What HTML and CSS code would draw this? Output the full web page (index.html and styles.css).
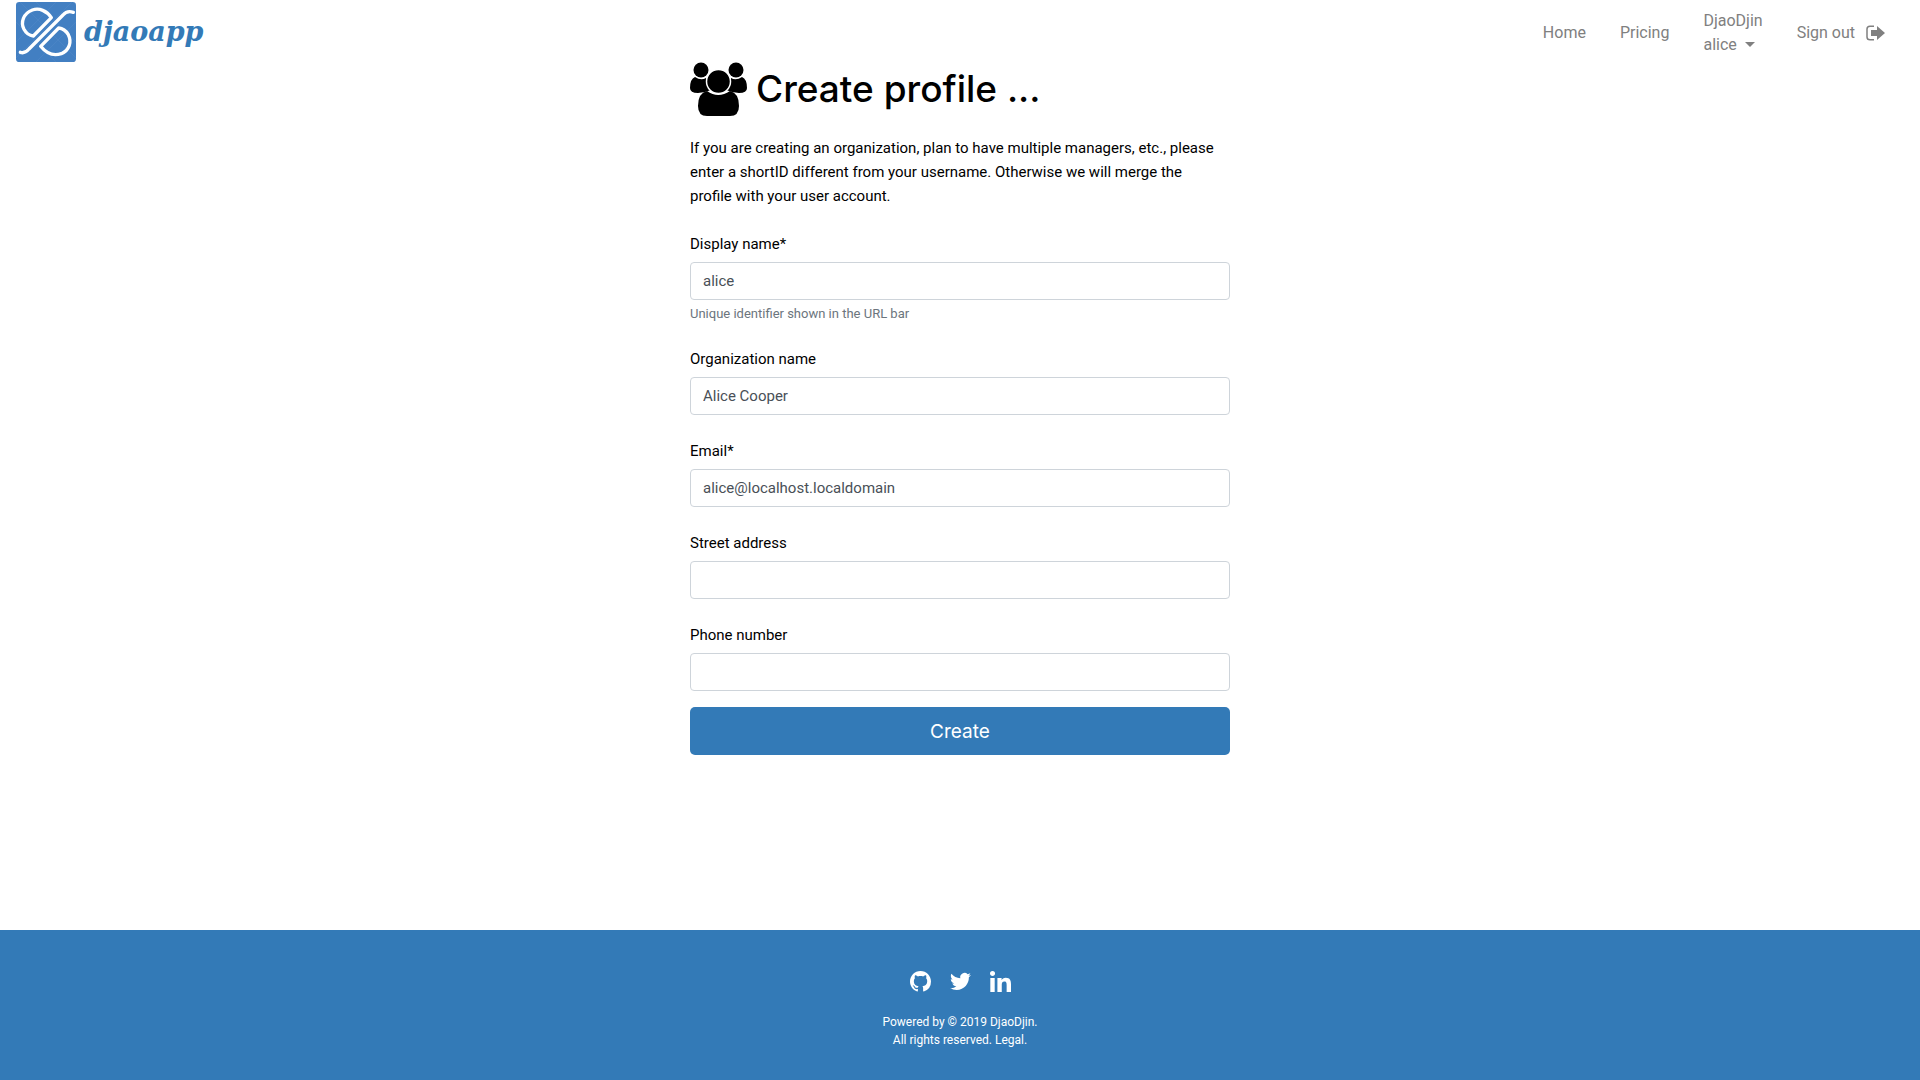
FILE: index.html
```html
<!DOCTYPE html>
<html lang="en">
<head>
<meta charset="utf-8">
<title>Create profile</title>
<link rel="stylesheet" href="styles.css">
</head>
<body>
<header class="navbar">
  <a class="brand" href="#">
    <svg class="brand-mark" viewBox="0 0 180 180" aria-hidden="true">
      <rect width="180" height="180" rx="10" fill="#427fc2"/>
      <g fill="none" stroke="#5a90cb" stroke-width="1">
        <path d="M0 120 120 0M0 60 120 180M60 0l120 120M60 180 180 60M12 0l168 168M0 168 168 0"/>
      </g>
      <g fill="none" stroke="#fff" stroke-width="10" stroke-linecap="round" stroke-linejoin="round">
        <path d="M106 47C92 26 70 17 49 24C22 35 13 60 24 82C31 95 40 101 52 102Z"/>
        <path d="M74 133L128 78C140 79 150 86 157 98C168 120 160 145 136 155C112 163 90 153 74 133Z"/>
        <path d="M13 151C24 155 31 150 39 141L141 39C150 28 159 26 172 31"/>
      </g>
    </svg>
    <span class="brand-name">djaoapp</span>
  </a>
  <nav class="nav">
    <a class="nav-link" href="#">Home</a>
    <a class="nav-link" href="#">Pricing</a>
    <a class="nav-link" href="#">DjaoDjin<br>alice <span class="caret"></span></a>
    <a class="nav-link nav-signout" href="#">Sign out
      <svg class="signout-icon" viewBox="0 0 20 16" aria-hidden="true"><path d="M8 1.200H4Q1 1.200 1 4V12Q1 14.800 4 14.800H8" fill="none" stroke="currentColor" stroke-width="1.500"/><path d="M5 5h6V1l8 7-8 7v-4H5z" fill="currentColor"/></svg>
    </a>
  </nav>
</header>
<main class="content">
  <h1 class="title">
    <svg class="title-icon" viewBox="0 0 57 54" aria-hidden="true">
      <circle cx="11" cy="8" r="7.500"/><circle cx="46" cy="8" r="7.500"/>
      <path d="M5 15Q11 19 16 16Q16 25 21 28Q14 31 8 31Q0 31 0 26Q0 17 5 15zM52 15Q46 19 41 16Q41 25 36 28Q43 31 49 31Q57 31 57 26Q57 17 52 15z"/>
      <path d="M17 29Q28 37 40 29Q49 31 49 44Q49 54 40 54H17Q8 54 8 44Q8 31 17 29z"/>
      <circle cx="28.500" cy="19.500" r="12" stroke="#fff" stroke-width="1.500"/>
    </svg>
    Create profile ...
  </h1>
  <p class="intro">If you are creating an organization, plan to have multiple managers, etc., please enter a shortID different from your username. Otherwise we will merge the profile with your user account.</p>
  <form class="form">
    <div class="field">
      <label for="slug">Display name*</label>
      <input id="slug" type="text" value="alice">
      <small class="hint">Unique identifier shown in the URL bar</small>
    </div>
    <div class="field">
      <label for="org">Organization name</label>
      <input id="org" type="text" value="Alice Cooper">
    </div>
    <div class="field">
      <label for="email">Email*</label>
      <input id="email" type="email" value="alice@localhost.localdomain">
    </div>
    <div class="field">
      <label for="street">Street address</label>
      <input id="street" type="text">
    </div>
    <div class="field">
      <label for="phone">Phone number</label>
      <input id="phone" type="tel">
    </div>
    <button class="submit" type="submit">Create</button>
  </form>
</main>
<footer class="footer">
  <div class="social">
    <a href="#" aria-label="GitHub"><svg viewBox="0 0 16 16"><path d="M8 0C3.580 0 0 3.580 0 8c0 3.540 2.290 6.530 5.470 7.590.4.070.55-.17.55-.38 0-.19-.01-.82-.01-1.490-2.010.37-2.530-.49-2.690-.94-.09-.23-.48-.94-.82-1.130-.28-.15-.68-.52-.01-.53.63-.01 1.080.58 1.230.82.72 1.210 1.870.87 2.330.66.07-.52.28-.87.51-1.070-1.780-.2-3.640-.89-3.640-3.950 0-.87.31-1.590.82-2.150-.08-.2-.36-1.020.08-2.120 0 0 .67-.21 2.200.82.64-.18 1.320-.27 2-.27s1.360.09 2 .27c1.530-1.040 2.200-.82 2.200-.82.44 1.100.16 1.920.08 2.120.51.56.82 1.270.82 2.150 0 3.070-1.870 3.750-3.650 3.950.29.25.54.73.54 1.480 0 1.070-.01 1.930-.01 2.200 0 .21.15.46.55.38A8.010 8.010 0 0 0 16 8c0-4.420-3.580-8-8-8z"/></svg></a>
    <a href="#" aria-label="Twitter"><svg viewBox="0 0 24 24"><path d="M23.950 4.570a10 10 0 0 1-2.820.77 4.960 4.960 0 0 0 2.160-2.720c-.95.550-2 .95-3.130 1.180a4.920 4.920 0 0 0-8.380 4.480C7.690 8.090 4.070 6.130 1.640 3.160a4.820 4.820 0 0 0-.67 2.480c0 1.710.87 3.210 2.190 4.100a4.900 4.900 0 0 1-2.230-.62v.06a4.920 4.920 0 0 0 3.950 4.830 5 5 0 0 1-2.210.08 4.940 4.940 0 0 0 4.600 3.420A9.870 9.870 0 0 1 0 19.540a14 14 0 0 0 7.550 2.210c9.050 0 14-7.500 14-13.980l-.02-.64a9.940 9.940 0 0 0 2.420-2.560z"/></svg></a>
    <a href="#" aria-label="LinkedIn"><svg viewBox="0 0 448 448"><path d="M100 448H7V149h93zM54 108C24 108 0 83 0 54a54 54 0 0 1 108 0c0 29-24 54-54 54zM448 448h-93V302c0-34-1-79-48-79-49 0-56 38-56 77v148h-93V149h89v41h1c13-24 43-48 88-48 94 0 112 62 112 142z"/></svg></a>
  </div>
  <p class="legal">Powered by © 2019 <a href="#">DjaoDjin</a>.<br>All rights reserved. <a href="#">Legal</a>.</p>
</footer>
</body>
</html>
```
FILE: styles.css
```css
* { box-sizing: border-box; }
body {
  margin: 0;
  min-height: 100vh;
  display: flex;
  flex-direction: column;
  font-family: Roboto, "Liberation Sans", sans-serif;
  font-size: 15px;
  line-height: 24px;
  color: #000;
  background: #fff;
}
a { color: inherit; text-decoration: none; }
.navbar {
  display: flex;
  align-items: center;
  justify-content: space-between;
  padding: 2px 16px 0;
}
.brand { display: flex; align-items: center; gap: 8px; color: #337ab7; }
.brand-mark { width: 60px; height: 60px; }
.brand-name {
  font: italic bold 27px/30px "DejaVu Serif", serif;
}
.nav {
  display: flex;
  align-items: center;
  gap: 34px;
  padding: 2px 18px 0 0;
  font-size: 16px;
  color: #808080;
}
.nav-signout { display: flex; align-items: center; gap: 11px; }
.signout-icon { width: 20px; height: 16px; }
.caret {
  display: inline-block;
  margin-left: 4px;
  vertical-align: 3px;
  border: 5px solid transparent;
  border-top-color: currentColor;
  border-bottom: 0;
}
.content {
  width: 100%;
  max-width: 540px;
  margin: 0 auto;
  flex: 1;
}
.title {
  display: flex;
  align-items: center;
  gap: 9px;
  margin: 0 0 20px;
  font-family: Inter, "Liberation Sans", sans-serif;
  font-size: 37px;
  line-height: 54px;
  font-weight: 500;
}
.title-icon { width: 57px; height: 54px; }
.intro { margin: 0 0 24px; padding-right: 8px; }
.form { display: flex; flex-direction: column; gap: 24px; }
.field { display: flex; flex-direction: column; }
.field label { margin-bottom: 6px; }
.field input {
  width: 100%;
  height: 38px;
  padding: 6px 12px;
  font: inherit;
  color: #495057;
  background: #fff;
  border: 1px solid #ced4da;
  border-radius: 4px;
}
.field .hint { margin-top: 4px; font-size: 13px; line-height: 19px; color: #6c757d; }
.submit {
  margin-top: -8px;
  height: 48px;
  font-family: Inter, "Liberation Sans", sans-serif;
  font-size: 19px;
  color: #fff;
  background: #337ab7;
  border: 0;
  border-radius: 5px;
}
.footer {
  display: flex;
  flex-direction: column;
  align-items: center;
  padding: 41px 0 31px;
  background: #337ab7;
  color: #fff;
  text-align: center;
}
.social { display: flex; gap: 19px; margin-bottom: 21px; }
.social svg { display: block; width: 21px; height: 21px; fill: #fff; }
.legal { margin: 0; font-size: 12px; line-height: 18px; }
```
